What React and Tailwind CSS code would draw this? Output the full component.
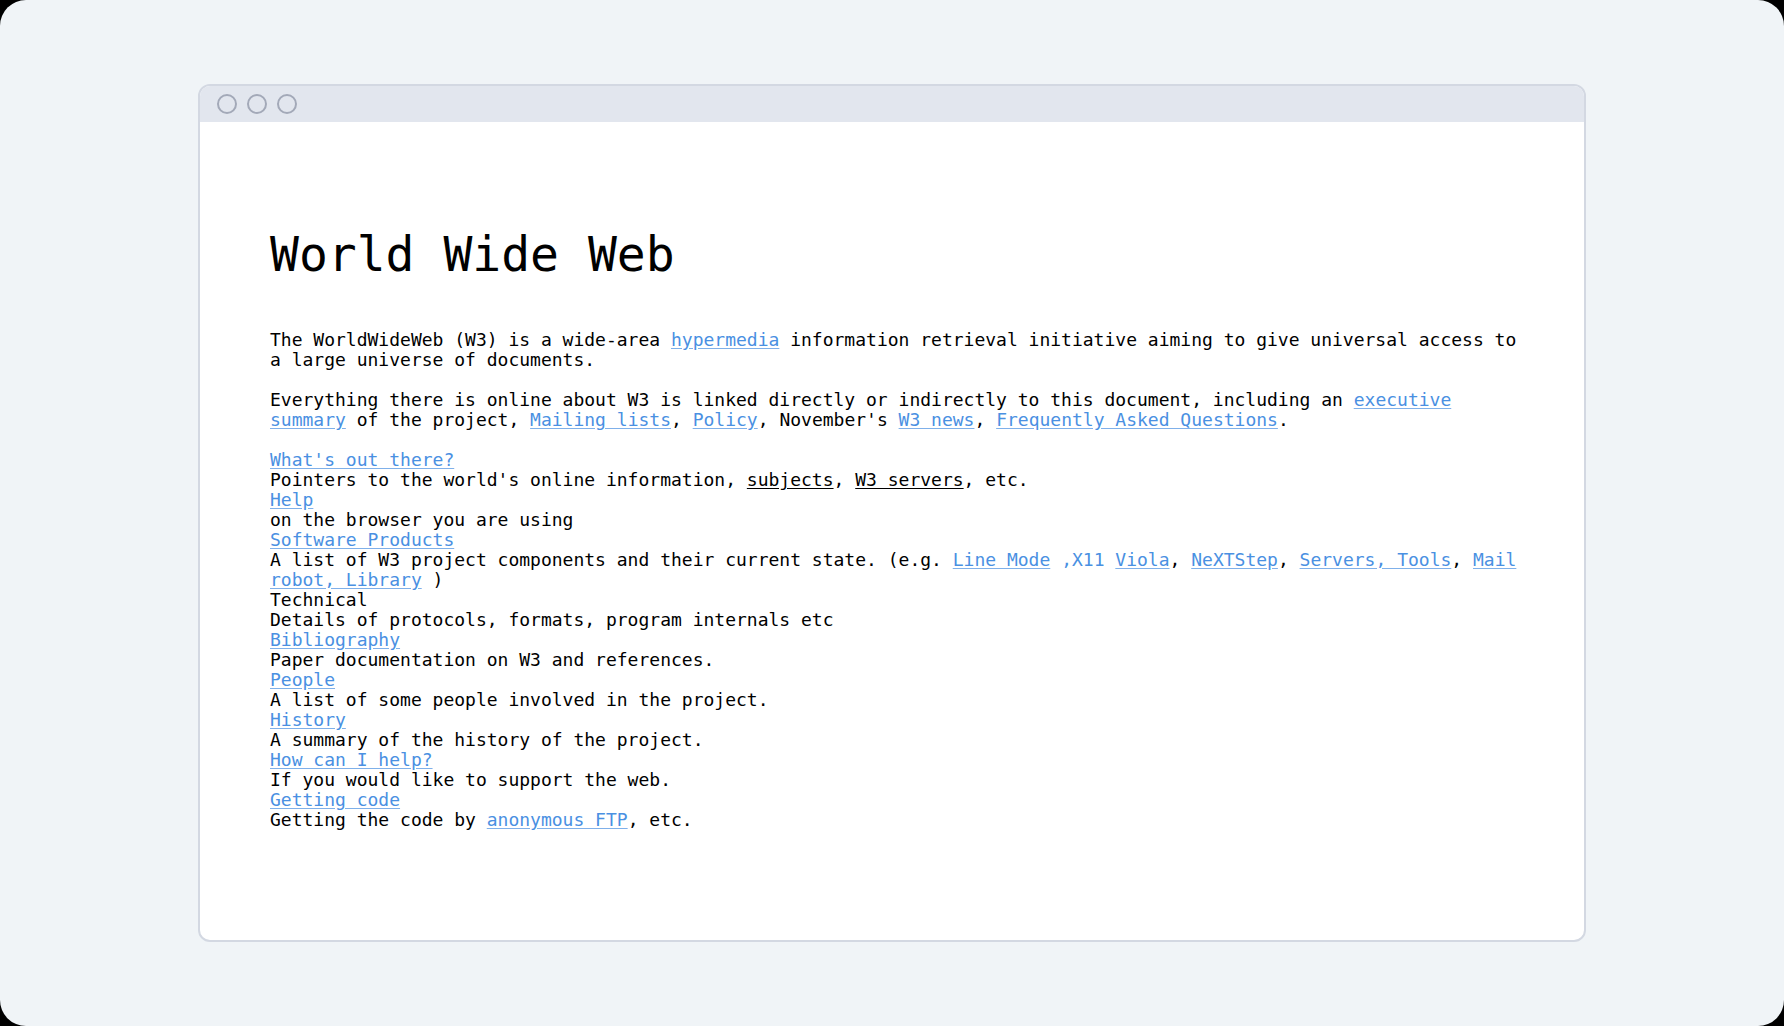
const link = "text-[#4a90e2] underline underline-offset-2 decoration-[#7fb0ea]";

function A({ children }) {
  return <a href="#" className={link}>{children}</a>;
}

const entries = [
  {
    title: <A>What's out there?</A>,
    body: (
      <>
        Pointers to the world's online information,{" "}
        <span className="underline underline-offset-2">subjects</span>,{" "}
        <span className="underline underline-offset-2">W3 servers</span>, etc.
      </>
    ),
  },
  { title: <A>Help</A>, body: "on the browser you are using" },
  {
    title: <A>Software Products</A>,
    body: (
      <>
        A list of W3 project components and their current state. (e.g.{" "}
        <A>Line Mode</A> <span className="text-[#4a90e2]">,X11</span>{" "}
        <A>Viola</A>, <A>NeXTStep</A>, <A>Servers, Tools</A>,{" "}
        <A>Mail robot, Library</A> )
      </>
    ),
  },
  { title: "Technical", body: "Details of protocols, formats, program internals etc" },
  { title: <A>Bibliography</A>, body: "Paper documentation on W3 and references." },
  { title: <A>People</A>, body: "A list of some people involved in the project." },
  { title: <A>History</A>, body: "A summary of the history of the project." },
  { title: <A>How can I help?</A>, body: "If you would like to support the web." },
  {
    title: <A>Getting code</A>,
    body: (
      <>
        Getting the code by <A>anonymous FTP</A>, etc.
      </>
    ),
  },
];

export default function App() {
  return (
    <div className="h-[1026px] w-[1784px] bg-black">
      <div className="flex h-full w-full flex-col rounded-[26px] bg-[#f0f4f7] pl-[198px] pt-[84px]">
        <div className="flex h-[858px] w-[1388px] flex-col overflow-hidden rounded-[12px] border-2 border-[#d3d8e2] bg-white">
          <div className="flex h-[36px] items-center gap-[10px] bg-[#e2e6ee] pl-[17px]">
            <span className="h-5 w-5 rounded-full border-2 border-[#a3a9b8]" />
            <span className="h-5 w-5 rounded-full border-2 border-[#a3a9b8]" />
            <span className="h-5 w-5 rounded-full border-2 border-[#a3a9b8]" />
          </div>
          <div
            className="w-[1328px] pl-[70px] pt-[104px] text-black"
            style={{ fontFamily: '"DejaVu Sans Mono", "Liberation Mono", monospace' }}
          >
            <h1 className="text-[48px] leading-[56px] font-normal">World Wide Web</h1>
            <div className="mt-[48px] w-[1256px] text-[18px] leading-[20px]">
              <p>
                The WorldWideWeb (W3) is a wide-area <A>hypermedia</A> information retrieval
                initiative aiming to give universal access to a large universe of documents.
              </p>
              <p className="mt-[20px]">
                Everything there is online about W3 is linked directly or indirectly to this
                document, including an <A>executive summary</A> of the project,{" "}
                <A>Mailing lists</A>, <A>Policy</A>, November's <A>W3 news</A>,{" "}
                <A>Frequently Asked Questions</A>.
              </p>
              <dl className="mt-[20px]">
                {entries.map((e, i) => (
                  <div key={i}>
                    <dt>{e.title}</dt>
                    <dd>{e.body}</dd>
                  </div>
                ))}
              </dl>
            </div>
          </div>
        </div>
      </div>
    </div>
  );
}
